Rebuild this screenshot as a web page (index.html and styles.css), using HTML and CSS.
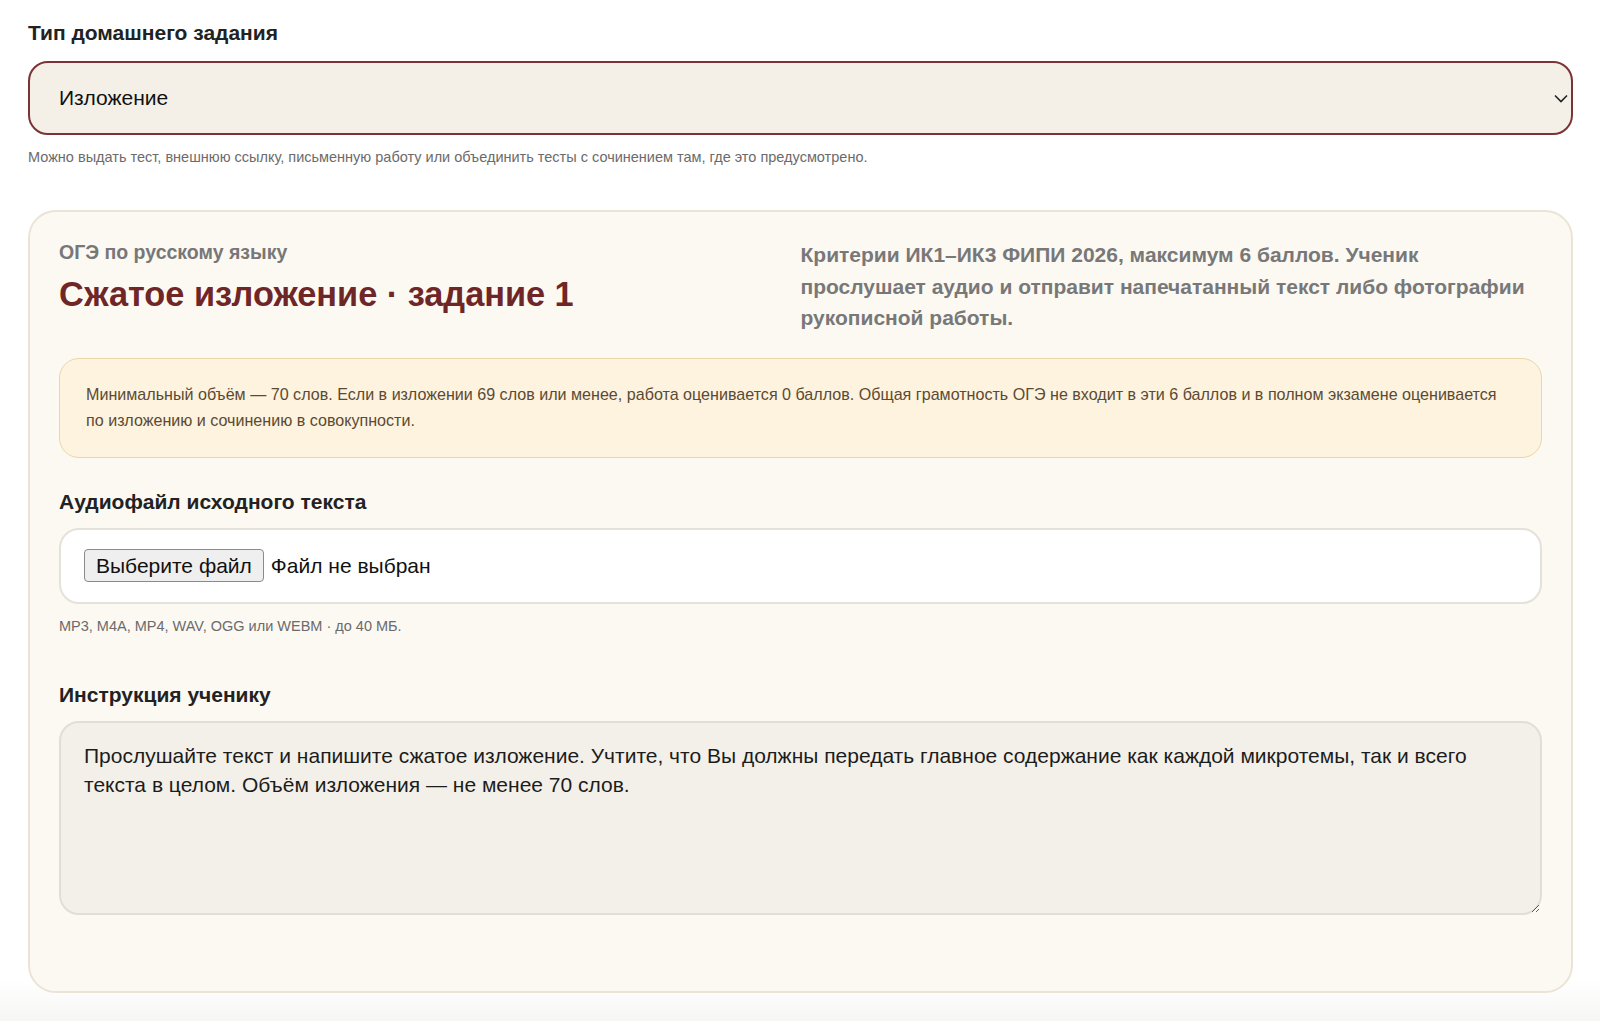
FILE: index.html
```html
<!DOCTYPE html>
<html lang="ru">
<head>
    <meta charset="UTF-8"/>
    <title>Домашнее задание</title>
    <link rel="stylesheet" href="styles.css">
</head>
<body>
<div class="page">
    <div class="field-label">Тип домашнего задания</div>
    <div class="type-select">
        <span>Изложение</span>
        <svg class="chevron" width="14" height="9" viewBox="0 0 14 9"><path d="M1 1.5l6 6 6-6" fill="none" stroke="#222" stroke-width="1.6"/></svg>
    </div>
    <p class="hint">Можно выдать тест, внешнюю ссылку, письменную работу или объединить тесты с сочинением там, где это предусмотрено.</p>

    <div class="task-card">
        <div class="task-head">
            <div>
                <div class="task-kicker">ОГЭ по русскому языку</div>
                <h2 class="task-title">Сжатое изложение · задание 1</h2>
            </div>
            <p class="task-desc">Критерии ИК1–ИК3 ФИПИ 2026, максимум 6 баллов. Ученик прослушает аудио и отправит напечатанный текст либо фотографии рукописной работы.</p>
        </div>

        <div class="notice">Минимальный объём — 70 слов. Если в изложении 69 слов или менее, работа оценивается 0 баллов. Общая грамотность ОГЭ не входит в эти 6 баллов и в полном экзамене оценивается по изложению и сочинению в совокупности.</div>

        <div class="field-label card-label">Аудиофайл исходного текста</div>
        <div class="file-box">
            <span class="file-btn">Выберите файл</span>
            <span class="file-name">Файл не выбран</span>
        </div>
        <p class="hint">MP3, M4A, MP4, WAV, OGG или WEBM · до 40 МБ.</p>

        <div class="field-label card-label second">Инструкция ученику</div>
        <textarea class="instruction">Прослушайте текст и напишите сжатое изложение. Учтите, что Вы должны передать главное содержание как каждой микротемы, так и всего текста в целом. Объём изложения — не менее 70 слов.</textarea>
    </div>
</div>
</body>
</html>
```

FILE: styles.css
```css
html, body {margin: 0; background: #fff;}
body {font-family: "Liberation Sans", Arial, sans-serif; color: #222;}

.page {padding: 21px 27px 0 28px; min-height: 1000px; background: linear-gradient(#fff 980px, #f6f6f5 1021px);}

.field-label {font-size: 21px; font-weight: bold; line-height: 24px; color: #222; margin-bottom: 16px;}

.type-select {
    display: flex;
    align-items: center;
    justify-content: space-between;
    height: 70px;
    padding: 0 3px 0 29px;
    border: 2px solid #7b3434;
    border-radius: 20px;
    background: #f4f0e7;
    font-size: 21px;
    color: #111;
}

.hint {margin: 13px 0 0; font-size: 14.5px; line-height: 18px; color: #6b6b6b;}

.task-card {
    margin-top: 44px;
    padding: 29px 29px 76px;
    border: 2px solid #ebe4d6;
    border-radius: 28px;
    background: #fcf9f3;
}

.task-head {display: grid; grid-template-columns: 1fr 1fr; column-gap: 0;}
.task-kicker {font-size: 19.5px; font-weight: bold; line-height: 22px; color: #777;}
.task-title {margin: 11px 0 0; font-size: 34.3px; line-height: 40px; color: #6f2626;}
.task-desc {margin: -2px 10px 0 0; font-size: 21px; font-weight: bold; line-height: 31.5px; color: #787878;}

.notice {
    margin-top: 24px;
    padding: 22px 26px 24px;
    border: 1px solid #ead6a6;
    border-radius: 20px;
    background: #fdf3df;
    font-size: 16.1px;
    line-height: 26px;
    color: #5c4a32;
}

.card-label {margin-top: 32px; margin-bottom: 14px;}
.card-label.second {margin-top: 48px;}

.file-box {
    display: flex;
    align-items: center;
    height: 72px;
    padding: 0 23px;
    border: 2px solid #e5e1db;
    border-radius: 20px;
    background: #fff;
    font-size: 21px;
}
.file-btn {
    padding: 4px 11px;
    border: 1px solid #8a8a8a;
    border-radius: 4px;
    background: #efefef;
    color: #111;
    line-height: 23px;
}
.file-name {margin-left: 7px; color: #111;}

.instruction {
    display: block;
    box-sizing: border-box;
    width: 100%;
    height: 194px;
    margin: 0;
    padding: 18px 23px;
    border: 2px solid #e2ded6;
    border-radius: 20px;
    background: #f3f0e9;
    font-family: "Liberation Sans", Arial, sans-serif;
    font-size: 21px;
    line-height: 29.5px;
    color: #1c1c1c;
}
```
